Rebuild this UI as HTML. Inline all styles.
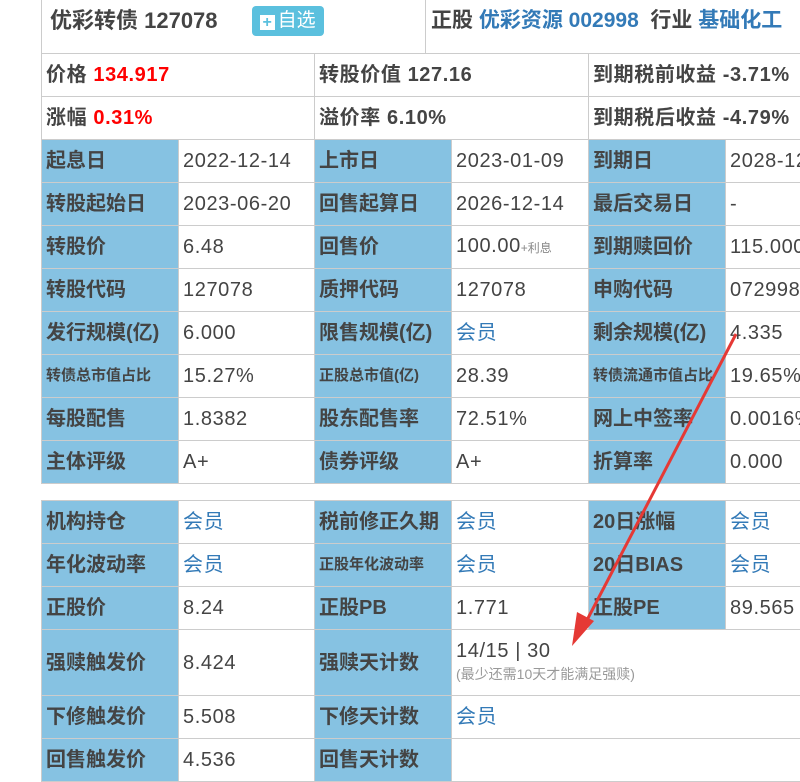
<!DOCTYPE html>
<html><head><meta charset="utf-8"><style>
body{margin:0;width:800px;height:755px;overflow:hidden;background:#fff;font-family:"Liberation Sans","Noto Sans CJK SC",sans-serif;color:#444;position:relative}
table{position:absolute;left:41px;border-collapse:collapse;table-layout:fixed;width:822px}
td{border:1px solid #ccc;padding:0 0 0 4px;height:42px;line-height:24px;vertical-align:middle;font-size:20px;letter-spacing:0.6px;white-space:nowrap;overflow:hidden}
td.l{background:#86c2e2;font-weight:bold;letter-spacing:0}
td.s{font-size:15px}
a{color:#337ab7;text-decoration:none}
.r{color:#f00}
.b{font-weight:bold}
.hd{position:absolute;top:0;height:53px;border-left:1px solid #ccc;box-sizing:border-box;white-space:nowrap}
</style></head><body>
<div class="hd" style="left:41px;width:384px;font-size:22px;font-weight:bold;padding:6px 0 0 8px;line-height:30px">优彩转债 127078 <span style="display:inline-block;vertical-align:top;margin-left:28px;background:#5bc0de;color:#fff;font-weight:normal;font-size:19px;border-radius:4px;padding:2px 8px 2px 8px;line-height:26px"><span style="display:inline-block;width:15px;height:15px;background:#fff;color:#5bc0de;font-size:16px;line-height:15px;text-align:center;font-weight:bold;vertical-align:-1px;margin-right:3px">+</span>自选</span></div>
<div class="hd" style="left:425px;width:400px;font-size:21px;font-weight:bold;padding:6px 0 0 5px;line-height:30px">正股 <a>优彩资源 002998</a>&nbsp;&nbsp;行业 <a>基础化工</a></div>
<table style="top:53px">
<colgroup><col style="width:137px"><col style="width:136px"><col style="width:137px"><col style="width:137px"><col style="width:137px"><col style="width:138px"></colgroup>
<tr><td colspan="2" class="b">价格 <span class="r">134.917</span></td><td colspan="2" class="b">转股价值 127.16</td><td colspan="2" class="b">到期税前收益 -3.71%</td></tr>
<tr><td colspan="2" class="b">涨幅 <span class="r">0.31%</span></td><td colspan="2" class="b">溢价率 6.10%</td><td colspan="2" class="b">到期税后收益 -4.79%</td></tr>
<tr><td class="l">起息日</td><td>2022-12-14</td><td class="l">上市日</td><td>2023-01-09</td><td class="l">到期日</td><td>2028-12-14</td></tr>
<tr><td class="l">转股起始日</td><td>2023-06-20</td><td class="l">回售起算日</td><td>2026-12-14</td><td class="l">最后交易日</td><td>-</td></tr>
<tr><td class="l">转股价</td><td>6.48</td><td class="l">回售价</td><td>100.00<span style="font-size:12px;color:#888;letter-spacing:0">+利息</span></td><td class="l">到期赎回价</td><td>115.000</td></tr>
<tr><td class="l">转股代码</td><td>127078</td><td class="l">质押代码</td><td>127078</td><td class="l">申购代码</td><td>072998</td></tr>
<tr><td class="l">发行规模(亿)</td><td>6.000</td><td class="l">限售规模(亿)</td><td><a>会员</a></td><td class="l">剩余规模(亿)</td><td>4.335</td></tr>
<tr><td class="l s">转债总市值占比</td><td>15.27%</td><td class="l s">正股总市值(亿)</td><td>28.39</td><td class="l s">转债流通市值占比</td><td>19.65%</td></tr>
<tr><td class="l">每股配售</td><td>1.8382</td><td class="l">股东配售率</td><td>72.51%</td><td class="l">网上中签率</td><td>0.0016%</td></tr>
<tr><td class="l">主体评级</td><td>A+</td><td class="l">债券评级</td><td>A+</td><td class="l">折算率</td><td>0.000</td></tr>
</table>
<table style="top:500px">
<colgroup><col style="width:137px"><col style="width:136px"><col style="width:137px"><col style="width:137px"><col style="width:137px"><col style="width:138px"></colgroup>
<tr><td class="l">机构持仓</td><td><a>会员</a></td><td class="l">税前修正久期</td><td><a>会员</a></td><td class="l">20日涨幅</td><td><a>会员</a></td></tr>
<tr><td class="l">年化波动率</td><td><a>会员</a></td><td class="l s">正股年化波动率</td><td><a>会员</a></td><td class="l">20日BIAS</td><td><a>会员</a></td></tr>
<tr><td class="l">正股价</td><td>8.24</td><td class="l">正股PB</td><td>1.771</td><td class="l">正股PE</td><td>89.565</td></tr>
<tr><td class="l" style="height:65px">强赎触发价</td><td>8.424</td><td class="l">强赎天计数</td><td colspan="3" style="line-height:22px">14/15 | 30<br><span style="font-size:14px;color:#999;letter-spacing:0">(最少还需10天才能满足强赎)</span></td></tr>
<tr><td class="l">下修触发价</td><td>5.508</td><td class="l">下修天计数</td><td colspan="3"><a>会员</a></td></tr>
<tr><td class="l">回售触发价</td><td>4.536</td><td class="l">回售天计数</td><td colspan="3"></td></tr>
</table>
<svg style="position:absolute;left:0;top:0" width="800" height="755"><line x1="736" y1="334" x2="586" y2="622" stroke="#e53935" stroke-width="3"/><polygon points="572,646 577,612 594,621" fill="#e53935"/></svg>
</body></html>
